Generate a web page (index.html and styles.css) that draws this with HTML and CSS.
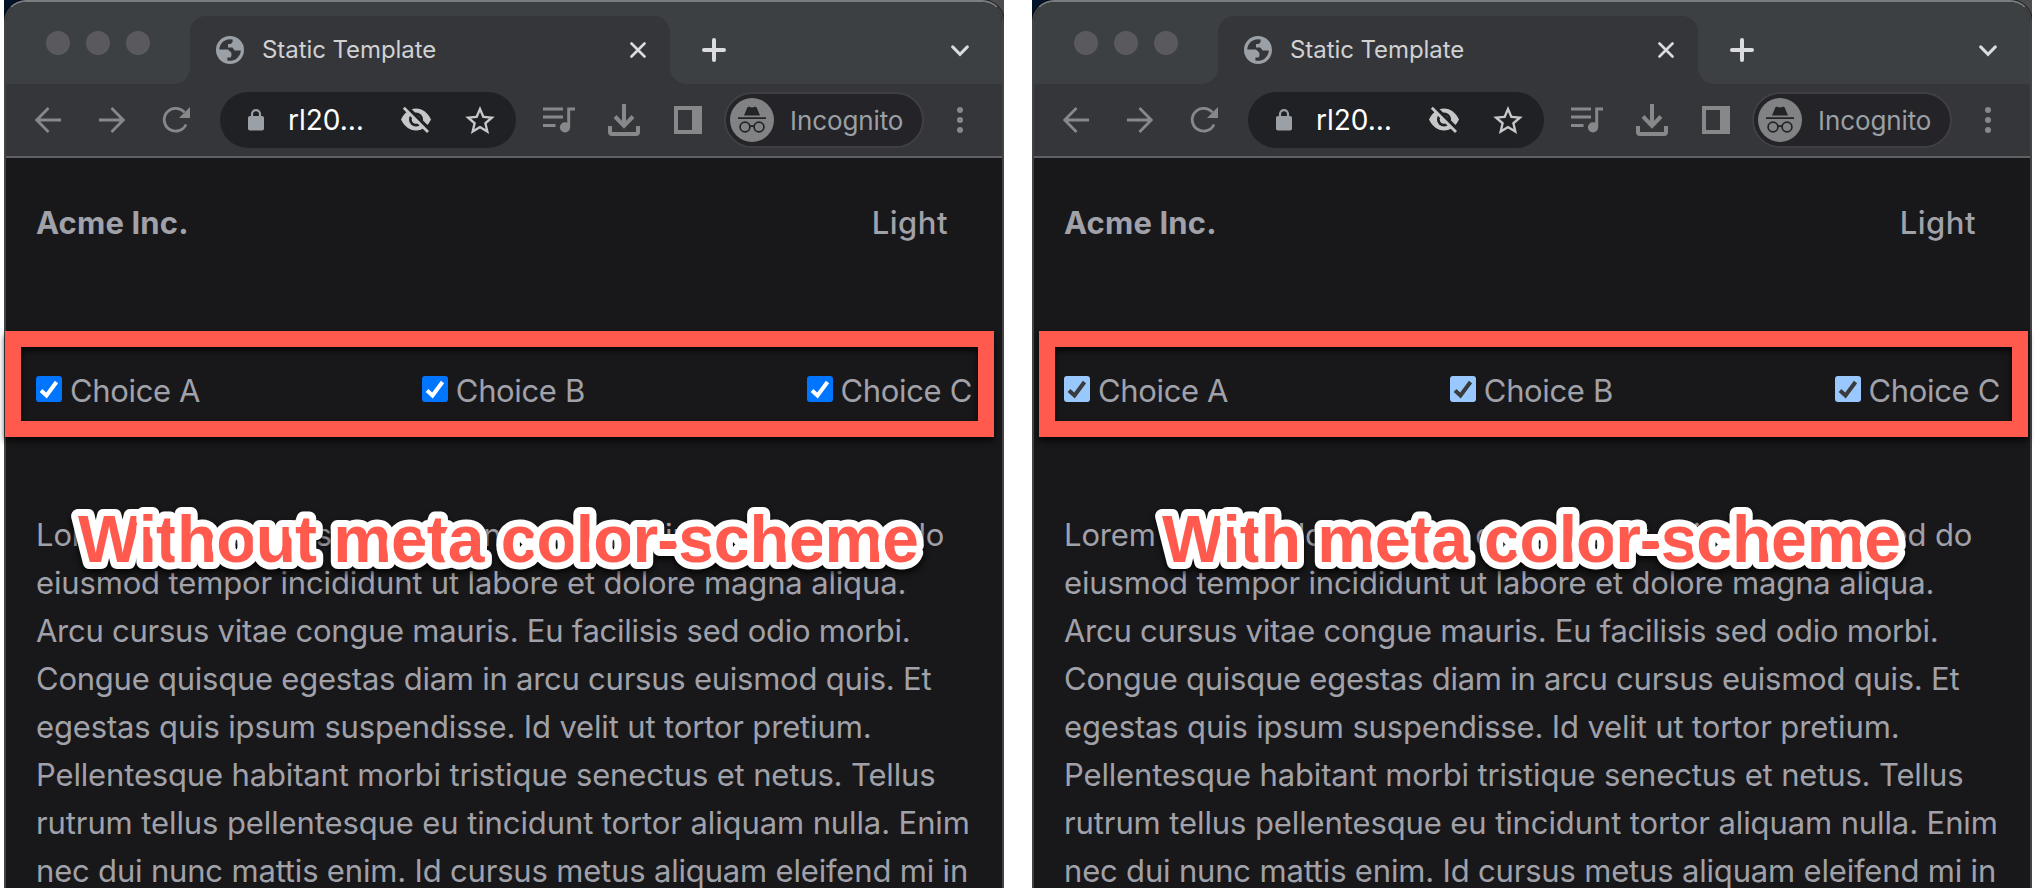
FILE: index.html
```
<!DOCTYPE html>
<html lang="en">
<head>
<meta charset="utf-8">
<title>Color scheme comparison</title>
<link rel="stylesheet" href="styles.css">
</head>
<body>
<svg class="sprite" width="0" height="0">
  <symbol id="globe" viewBox="0 0 28 28">
    <circle cx="14" cy="14" r="14" fill="#9aa0a6"/>
    <path fill="#35363a" d="M3.2 13.6A10.8 10.8 0 0 1 16.6 3.5V6L14.8 8H12V11.4H16.4L18.6 14.4H24.8A10.8 10.8 0 0 1 11.4 24.5V21.6H14.6L15.4 20V16.8L12 13.6Z"/>
  </symbol>
  <symbol id="close" viewBox="0 0 16 16"><path d="M1.5 1.5 14.5 14.5M14.5 1.5 1.5 14.5" stroke="#dadce0" stroke-width="2.6" stroke-linecap="round"/></symbol>
  <symbol id="plus" viewBox="0 0 24 24"><path d="M12 2V22M2 12H22" stroke="#dadce0" stroke-width="4" stroke-linecap="round"/></symbol>
  <symbol id="chevron" viewBox="0 0 18 12"><path d="M1.7 1.9 9 9.3 16.3 1.9" fill="none" stroke="#dadce0" stroke-width="3" stroke-linecap="round"/></symbol>
  <symbol id="back" viewBox="0 0 26 26"><path d="M26 13H2M13.5 1 1.8 13 13.5 25" fill="none" stroke="#87888a" stroke-width="2.8"/></symbol>
  <symbol id="forward" viewBox="0 0 26 26"><path d="M0 13H24M12.5 1 24.2 13 12.5 25" fill="none" stroke="#87888a" stroke-width="2.8"/></symbol>
  <symbol id="reload" viewBox="0 0 28 28"><path d="M24 18.5A11.4 11.4 0 1 1 22.4 6.4" fill="none" stroke="#87888a" stroke-width="2.8"/><path d="M28 1V12H17Z" fill="#87888a"/></symbol>
  <symbol id="lock" viewBox="0 0 16 22"><rect y="7" width="16" height="14.5" rx="2" fill="#9aa0a6"/><path d="M4 8V5.2A4 4 0 0 1 12 5.2V8" fill="none" stroke="#9aa0a6" stroke-width="2.2"/></symbol>
  <symbol id="eye-off" viewBox="0 0 30 28">
    <path fill="#c6c7c8" d="M0 13.5C3 7 8.5 2.5 15 2.5S27 7 30 13.5C27 20 21.5 24.5 15 24.5S3 20 0 13.5Z"/>
    <circle cx="15" cy="13.5" r="7" fill="#202124"/><circle cx="15" cy="13.5" r="4.3" fill="#c6c7c8"/>
    <path d="M5 0 29.5 24.5" stroke="#202124" stroke-width="3.5"/>
    <path d="M2.8 1.8 27 26" stroke="#c6c7c8" stroke-width="2.8"/>
  </symbol>
  <symbol id="star" viewBox="2 2 20 19"><path fill="#c6c7c8" d="M22 9.240l-7.190-.620L12 2 9.190 8.630 2 9.240l5.460 4.730L5.820 21 12 17.270 18.180 21l-1.630-7.030L22 9.240zM12 15.400l-3.760 2.270 1-4.280-3.320-2.880 4.380-.380L12 6.100l1.710 4.040 4.380.380-3.320 2.880 1 4.280L12 15.400z"/></symbol>
  <symbol id="media" viewBox="0 0 32 26"><path d="M0 2H20M0 10H20M0 18.5H12.5M32 2H25.7V20" fill="none" stroke="#87888a" stroke-width="3"/><circle cx="22" cy="20.3" r="5.1" fill="#87888a"/></symbol>
  <symbol id="download" viewBox="0 0 32 32"><path d="M16 0V22M7 12.5 16 21.8 25 12.5" fill="none" stroke="#87888a" stroke-width="4"/><path d="M2 22V28Q2 30 4 30H28Q30 30 30 28V22" fill="none" stroke="#87888a" stroke-width="4"/></symbol>
  <symbol id="panel" viewBox="0 0 28 28"><path fill="#87888a" fill-rule="evenodd" d="M0 0H28V28H0ZM4 4V24H18V4Z"/></symbol>
  <symbol id="incognito" viewBox="0 0 44 44">
    <circle cx="22" cy="22" r="22" fill="#818284"/>
    <path fill="#242328" d="M14 17.5 17.2 9.7Q17.8 8.3 19.2 8.8Q22 10 24.8 8.8Q26.2 8.3 26.8 9.7L30 17.5ZM8 19.3H36V20.9H8Z"/>
    <g fill="none" stroke="#242328" stroke-width="1.7"><circle cx="15" cy="29" r="4.9"/><circle cx="29" cy="29" r="4.9"/><path d="M19.8 28.5Q22 27.3 24.2 28.5"/></g>
  </symbol>
  <symbol id="dots" viewBox="0 0 6 26"><g fill="#87888a"><circle cx="3" cy="3" r="3"/><circle cx="3" cy="13" r="3"/><circle cx="3" cy="23" r="3"/></g></symbol>
</svg>

<main class="comparison">
  <section class="shot">
    <div class="browser">
      <div class="tabstrip">
        <div class="lights"><i></i><i></i><i></i></div>
        <div class="tab"><svg width="28" height="28"><use href="#globe"/></svg><span class="tab-title">Static Template</span><svg width="16" height="16"><use href="#close"/></svg></div>
        <svg class="new-tab" width="24" height="24"><use href="#plus"/></svg>
        <svg class="tab-search" width="18" height="12"><use href="#chevron"/></svg>
      </div>
      <div class="toolbar">
        <svg width="26" height="26"><use href="#back"/></svg>
        <svg class="forward" width="26" height="26"><use href="#forward"/></svg>
        <svg class="reload" width="28" height="28"><use href="#reload"/></svg>
        <div class="omnibox"><svg class="lock" width="16" height="22"><use href="#lock"/></svg><span class="url">rl20…</span><svg width="30" height="28"><use href="#eye-off"/></svg><svg class="star" width="30" height="28"><use href="#star"/></svg></div>
        <svg class="media" width="32" height="26"><use href="#media"/></svg>
        <svg class="download" width="32" height="32"><use href="#download"/></svg>
        <svg class="panel" width="28" height="28"><use href="#panel"/></svg>
        <div class="profile"><svg width="44" height="44"><use href="#incognito"/></svg><span>Incognito</span></div>
        <svg class="dots" width="6" height="26"><use href="#dots"/></svg>
      </div>
      <div class="page">
        <header class="site-header"><strong>Acme Inc.</strong><span class="theme">Light</span></header>
        <div class="choices">
          <label class="choice"><svg class="check" viewBox="0 0 26 26"><path d="M5 14.5 10.5 19.5 20.5 6"/></svg>Choice A</label>
          <label class="choice"><svg class="check" viewBox="0 0 26 26"><path d="M5 14.5 10.5 19.5 20.5 6"/></svg>Choice B</label>
          <label class="choice"><svg class="check" viewBox="0 0 26 26"><path d="M5 14.5 10.5 19.5 20.5 6"/></svg>Choice C</label>
        </div>
        <p class="copy"><span>Lorem ipsum dolor sit amet, consectetur adipiscing elit, sed do</span><span>eiusmod tempor incididunt ut labore et dolore magna aliqua.</span><span>Arcu cursus vitae congue mauris. Eu facilisis sed odio morbi.</span><span>Congue quisque egestas diam in arcu cursus euismod quis. Et</span><span>egestas quis ipsum suspendisse. Id velit ut tortor pretium.</span><span>Pellentesque habitant morbi tristique senectus et netus. Tellus</span><span>rutrum tellus pellentesque eu tincidunt tortor aliquam nulla. Enim</span><span>nec dui nunc mattis enim. Id cursus metus aliquam eleifend mi in</span></p>
      </div>
    </div>
    <div class="marker marker-without"></div>
    <svg class="caption" width="1000" height="120"><text x="74" y="72" textLength="841">Without meta color-scheme</text></svg>
  </section>

  <section class="shot dark-scheme">
    <div class="browser">
      <div class="tabstrip">
        <div class="lights"><i></i><i></i><i></i></div>
        <div class="tab"><svg width="28" height="28"><use href="#globe"/></svg><span class="tab-title">Static Template</span><svg width="16" height="16"><use href="#close"/></svg></div>
        <svg class="new-tab" width="24" height="24"><use href="#plus"/></svg>
        <svg class="tab-search" width="18" height="12"><use href="#chevron"/></svg>
      </div>
      <div class="toolbar">
        <svg width="26" height="26"><use href="#back"/></svg>
        <svg class="forward" width="26" height="26"><use href="#forward"/></svg>
        <svg class="reload" width="28" height="28"><use href="#reload"/></svg>
        <div class="omnibox"><svg class="lock" width="16" height="22"><use href="#lock"/></svg><span class="url">rl20…</span><svg width="30" height="28"><use href="#eye-off"/></svg><svg class="star" width="30" height="28"><use href="#star"/></svg></div>
        <svg class="media" width="32" height="26"><use href="#media"/></svg>
        <svg class="download" width="32" height="32"><use href="#download"/></svg>
        <svg class="panel" width="28" height="28"><use href="#panel"/></svg>
        <div class="profile"><svg width="44" height="44"><use href="#incognito"/></svg><span>Incognito</span></div>
        <svg class="dots" width="6" height="26"><use href="#dots"/></svg>
      </div>
      <div class="page">
        <header class="site-header"><strong>Acme Inc.</strong><span class="theme">Light</span></header>
        <div class="choices">
          <label class="choice"><svg class="check" viewBox="0 0 26 26"><path d="M5 14.5 10.5 19.5 20.5 6"/></svg>Choice A</label>
          <label class="choice"><svg class="check" viewBox="0 0 26 26"><path d="M5 14.5 10.5 19.5 20.5 6"/></svg>Choice B</label>
          <label class="choice"><svg class="check" viewBox="0 0 26 26"><path d="M5 14.5 10.5 19.5 20.5 6"/></svg>Choice C</label>
        </div>
        <p class="copy"><span>Lorem ipsum dolor sit amet, consectetur adipiscing elit, sed do</span><span>eiusmod tempor incididunt ut labore et dolore magna aliqua.</span><span>Arcu cursus vitae congue mauris. Eu facilisis sed odio morbi.</span><span>Congue quisque egestas diam in arcu cursus euismod quis. Et</span><span>egestas quis ipsum suspendisse. Id velit ut tortor pretium.</span><span>Pellentesque habitant morbi tristique senectus et netus. Tellus</span><span>rutrum tellus pellentesque eu tincidunt tortor aliquam nulla. Enim</span><span>nec dui nunc mattis enim. Id cursus metus aliquam eleifend mi in</span></p>
      </div>
    </div>
    <div class="marker marker-with"></div>
    <svg class="caption" width="1000" height="120"><text x="130" y="72" textLength="739">With meta color-scheme</text></svg>
  </section>
</main>
</body>
</html>
```
FILE: styles.css
```
* { box-sizing: border-box; }
body { margin: 0; height: 888px; overflow: hidden; background: #fff; font-family: Inter, sans-serif; }
svg { display: block; flex: none; }
.sprite { position: absolute; }

.comparison { display: flex; gap: 28px; padding-left: 4px; height: 888px; }
.shot {
  position: relative;
  width: 1000px;
  height: 888px;
  flex: none;
  background: linear-gradient(90deg, #02142a 0 40px, #4c4c4e 40px);
  background-size: 100% 40px;
  background-repeat: no-repeat;
}
.browser {
  height: 888px;
  overflow: hidden;
  border: 2px solid #434345;
  border-top-color: #7b7e80;
  border-bottom: 0;
  border-radius: 22px 22px 0 0;
  background: #18181a;
  box-shadow: 0 0 0 1px #0008;
  clip-path: inset(0 0 0 0);
}

/* Tab strip */
.tabstrip { display: flex; height: 82px; background: #3c4043; }
.lights { display: flex; gap: 16px; width: 184px; padding: 29px 0 0 40px; }
.lights i { width: 24px; height: 24px; border-radius: 50%; background: #5a5a5e; }
.tab {
  position: relative;
  display: flex;
  align-items: center;
  width: 480px;
  height: 68px;
  margin-top: 14px;
  padding: 0 24px 0 26px;
  border-radius: 16px 16px 0 0;
  background: #35363a;
}
.tab::before, .tab::after {
  content: "";
  position: absolute;
  top: 52px;
  width: 16px;
  height: 16px;
}
.tab::before { left: -16px; background: radial-gradient(circle at 0 0, #3c4043 15.5px, #35363a 16px); }
.tab::after { right: -16px; background: radial-gradient(circle at 16px 0, #3c4043 15.5px, #35363a 16px); }
.tab-title { flex: 1; margin-left: 18px; font-size: 24px; letter-spacing: -0.07px; line-height: 32px; color: #d0d1d3; }
.new-tab { margin: 36px 0 0 32px; }
.tab-search { margin: 43px 0 0 225px; }

/* Toolbar */
.toolbar { display: flex; align-items: center; height: 74px; padding-left: 29px; border-bottom: 2px solid #606164; background: #35363a; }
.forward { margin-left: 38px; }
.reload { margin-left: 37px; }
.omnibox { display: flex; align-items: center; width: 296px; height: 56px; margin-left: 30px; padding-left: 28px; border-radius: 28px; background: #202124; }
.url { width: 113px; margin-left: 24px; font-size: 28px; line-height: 40px; color: #fff; }
.star { margin-left: 34px; }
.media { margin-left: 27px; }
.download { margin-left: 33px; }
.panel { margin-left: 34px; }
.profile { display: flex; align-items: center; width: 200px; height: 56px; margin-left: 22px; padding-left: 4px; border: 2px solid #3f3f44; border-radius: 28px; background: #242328; color: #9aa0a6; }
.profile span { margin-left: 16px; padding-top: 2px; font-size: 26px; letter-spacing: -0.1px; line-height: 36px; }
.dots { margin-left: 33px; }

/* Page */
.page { padding: 41px 30px 0; font-size: 31px; line-height: 48px; color: #a1a1aa; }
.site-header { display: flex; justify-content: space-between; padding-right: 24px; letter-spacing: 0.15px; }
.theme { font-weight: 500; letter-spacing: 0.5px; }
.choices { display: flex; justify-content: space-between; margin-top: 120px; }
.choice { display: flex; letter-spacing: -0.35px; }
.check { width: 26px; height: 26px; margin: 9px 8px 0 0; border-radius: 3px; background: #0075ff; }
.check path { fill: none; stroke: #fff; stroke-width: 4px; }
.dark-scheme .check { background: #99c8ff; }
.dark-scheme .check path { stroke: #3b3b3b; }
.copy { margin: 96px -30px 0 0; white-space: nowrap; }
.copy span { display: block; letter-spacing: -0.15px; }
.copy span:nth-child(3) { letter-spacing: -0.265px; }
.copy span:nth-child(4) { letter-spacing: -0.244px; }
.copy span:nth-child(7) { letter-spacing: -0.105px; }
.copy span:nth-child(8) { letter-spacing: -0.178px; }

/* Annotations laid over the screenshots */
.marker { position: absolute; top: 331px; height: 106px; border: 16px solid #ff5a4d; filter: drop-shadow(0 4px 3px rgba(0, 0, 0, 0.75)); }
.marker-without { left: 1px; width: 989px; }
.marker-with { left: 6.5px; width: 989.5px; }
.caption { position: absolute; left: 0; top: 490px; filter: drop-shadow(0 4px 3px rgba(0, 0, 0, 0.75)); }
.caption text {
  font: bold 66px "Liberation Sans", sans-serif;
  fill: #ff5a4d;
  stroke: #fff;
  stroke-width: 14px;
  stroke-linejoin: round;
  paint-order: stroke;
}
```
